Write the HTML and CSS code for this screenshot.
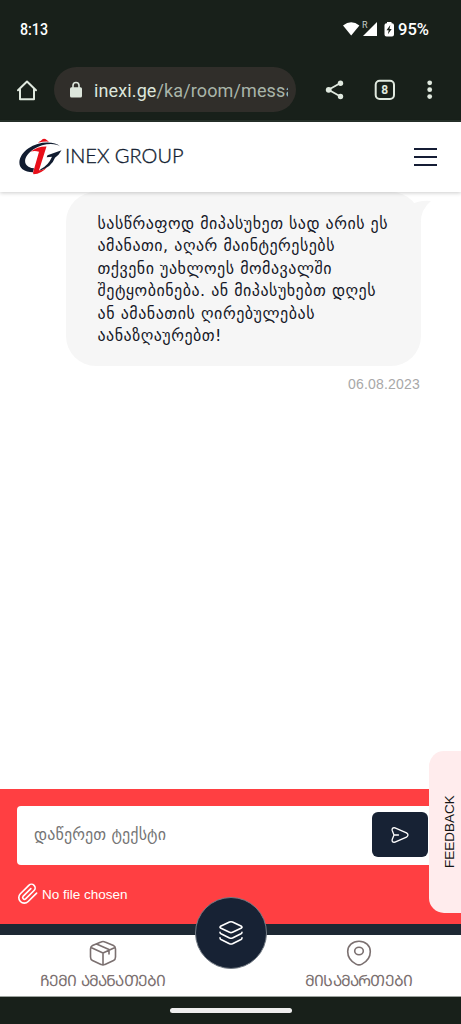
FILE: index.html
```html
<!DOCTYPE html>
<html lang="ka">
<head>
<meta charset="utf-8">
<title>INEX GROUP</title>
<link rel="stylesheet" href="styles.css">
</head>
<body>
<div class="phone">
  <div class="status">
    <svg viewBox="0 0 461 60" width="461" height="60">
      <text x="20" y="35" class="clock" textLength="28" lengthAdjust="spacingAndGlyphs">8:13</text>
      <path fill="#fff" d="M343 25.500Q351.200 18.800 359.400 25.500L351.200 35.500Z"/>
      <text x="362" y="27.500" class="roam">R</text>
      <path fill="#fff" d="M377 22V36H363Z"/>
      <path fill="#fff" d="M387 22h4.500v1.300h.5q2 0 2 2V34.500q0 2-2 2h-5.500q-2 0-2-2V25.300q0-2 2-2h.5z"/>
      <path fill="#18201a" d="M390.300 25l-3.800 5.300h2.200l-.8 4 3.800-5.300h-2.200z"/>
      <text x="398" y="35" class="clock" textLength="31" lengthAdjust="spacingAndGlyphs">95%</text>
    </svg>
  </div>
  <div class="browser">
    <svg class="home" viewBox="0 0 22 22" width="22" height="22" fill="none" stroke="#e0e9df" stroke-width="2" stroke-linejoin="round" stroke-linecap="round"><path d="M2 11.200L11 2.500l9 8.700M4 10.500V20.300h14V10.500"/></svg>
    <div class="address">
      <svg viewBox="0 0 12 17" width="12" height="17"><path d="M3 7V4.500a3 3 0 0 1 6 0V7" fill="none" stroke="#dde6dc" stroke-width="1.600"/><rect y="6.200" width="12" height="10.300" rx="1.500" fill="#dde6dc"/></svg>
      <div class="url"><span class="host">inexi.ge</span>/ka/room/messa</div>
    </div>
    <svg class="tools" viewBox="0 0 120 24" width="120" height="24">
      <g fill="#e0e9df" stroke="#e0e9df"><path d="M20.500 5L8.500 11.800l12 6.700" fill="none" stroke-width="1.800"/><circle cx="20.500" cy="5.200" r="2.700" stroke="none"/><circle cx="8.700" cy="11.800" r="2.900" stroke="none"/><circle cx="20.500" cy="18.500" r="2.700" stroke="none"/></g>
      <rect x="55.700" y="2.700" width="18.300" height="18.300" rx="4" fill="none" stroke="#e0e9df" stroke-width="2"/>
      <text x="64.700" y="16.200" class="tabs" text-anchor="middle">8</text>
      <g fill="#e0e9df"><circle cx="109.700" cy="4.800" r="2.400"/><circle cx="109.700" cy="11.700" r="2.400"/><circle cx="109.700" cy="18.600" r="2.400"/></g>
    </svg>
  </div>
  <header class="header">
    <svg viewBox="0 0 168 40" width="168" height="40">
      <g transform="translate(.5 -1.800)">
        <path fill="#111c30" d="M42 12.500C37 8 24 9 15 15C6 21 4 29 10 32.500Q13 34 15.500 34L14.500 38Q8 38 4 35C-2 30 1 20 10 14C20 7 36 6.500 42 12.500Z"/>
        <path fill="#111c30" d="M43 16L29 21l-.8 2 5.300-.5Q30 31 22 35L21 36.500Q33 33 36.500 23.500L40 20.500Z"/>
        <path fill="#e80f1a" d="M19.500 8.500Q21 7 22.500 6.500Q25 3 28.500 6L30.500 7.500Q26 7 19.500 8.500ZM12 17.500Q19 12 28 12.200L20.500 36Q24 36.500 28.500 33Q23 39.500 15 40L14.500 38.500L20.500 17.500Q16 16 12 17.500Z"/>
      </g>
      <text x="47" y="27.300" class="brand" textLength="118.500" lengthAdjust="spacingAndGlyphs">INEX GROUP</text>
    </svg>
    <div class="burger"><i></i><i></i><i></i></div>
  </header>
  <main class="chat">
    <div class="bubble">
      <svg viewBox="0 0 355 171" width="355" height="171" class="message">
        <text x="31.500" y="37" textLength="290">სასწრაფოდ მიპასუხეთ სად არის ეს</text>
        <text x="31.500" y="59.300" textLength="237">ამანათი, აღარ მაინტერესებს</text>
        <text x="31.500" y="81.700" textLength="234">თქვენი უახლოეს მომავალში</text>
        <text x="31.500" y="104" textLength="278">შეტყობინება. ან მიპასუხებთ დღეს</text>
        <text x="31.500" y="126.500" textLength="217">ან ამანათის ღირებულებას</text>
        <text x="31.500" y="149" textLength="124">აანაზღაურებთ!</text>
      </svg>
      <svg class="tail" viewBox="0 0 20 30" width="20" height="30"><path fill="#f6f6f6" d="M0 12Q8 7 20 8Q10 16 9.500 30H0Z"/></svg>
    </div>
    <time class="date">06.08.2023</time>
  </main>
  <section class="composer">
    <div class="field">
      <svg viewBox="0 0 150 30" width="150" height="30" class="placeholder"><text x="1" y="20" textLength="132">დაწერეთ ტექსტი</text></svg>
      <div class="send">
        <svg viewBox="0 0 20 20" width="20" height="20" fill="none" stroke="#fff" stroke-width="1.300" stroke-linejoin="round" stroke-linecap="round"><path d="M5 2.800L16.500 7.900Q19.500 10 16.500 12.100L5 17.200Q1.500 17.700 2.200 14.500L4 10L2.200 5.500Q1.500 2.300 5 2.800ZM4 10H8.500"/></svg>
      </div>
    </div>
    <div class="file">
      <svg viewBox="0 0 24 24" width="22" height="24" fill="none" stroke="#fff" stroke-width="1.800" stroke-linecap="round" stroke-linejoin="round"><path d="M21.400 11l-9.200 9.200a6 6 0 0 1-8.500-8.500l9.200-9.200a4 4 0 0 1 5.700 5.700L9.400 17.400a2 2 0 0 1-2.800-2.800l8.500-8.500"/></svg>
      <span>No file chosen</span>
    </div>
    <aside class="feedback"><span>FEEDBACK</span></aside>
  </section>
  <nav class="nav">
    <div class="item left">
      <svg viewBox="0 0 28 26" width="28" height="26" fill="none" stroke="#7b7070" stroke-width="1.600" stroke-linejoin="round" stroke-linecap="round"><path d="M12 1.900Q14 1 16 1.900L24.500 5.500Q26.500 6.500 26.500 9V17Q26.500 19.500 24.500 20.500L16 24.400Q14 25.400 12 24.400L3.500 20.500Q1.500 19.500 1.500 17V9Q1.500 6.500 3.500 5.500ZM2 7.500L14 13L26 7.500M14 13V25M7.500 4L20 9.500V14"/></svg>
      <svg class="label" viewBox="0 0 130 22" width="130" height="22"><text x="2" y="16" textLength="126">ᲩᲔᲛᲘ ᲐᲛᲐᲜᲐᲗᲔᲑᲘ</text></svg>
    </div>
    <div class="item right">
      <svg viewBox="0 0 26 26" width="26" height="26" fill="none" stroke="#7b7070" stroke-width="1.600"><path d="M13 1.200C6.500 1.200 1.700 5.500 1.700 11.500C1.700 17 5 21.500 10 24.100Q13 25.600 16 24.100C21 21.500 24.300 17 24.300 11.500C24.300 5.500 19.500 1.200 13 1.200Z"/><ellipse cx="13" cy="11" rx="4.300" ry="3.800"/></svg>
      <svg class="label" viewBox="0 0 110 22" width="110" height="22"><text x="1" y="16" textLength="108">ᲛᲘᲡᲐᲛᲐᲠᲗᲔᲑᲘ</text></svg>
    </div>
    <div class="hub">
      <svg viewBox="0 0 26 26" width="26" height="26" fill="none" stroke="#fff" stroke-width="1.600" stroke-linejoin="round" stroke-linecap="round"><path d="M2.500 6.300L11.500 2Q13 1.400 14.500 2L23.500 6.300Q24.500 7.200 23.500 8L14.500 12.300Q13 13 11.500 12.300L2.500 8Q1.500 7.200 2.500 6.300ZM2 12.200Q2 13.200 3 13.800L11.500 18Q13 18.600 14.500 18L23 13.800Q24 13.200 24 12.200M2 17.700Q2 18.900 3 19.500L11.500 23.700Q13 24.300 14.500 23.700L23 19.500Q24 18.900 24 17.700"/></svg>
    </div>
  </nav>
  <div class="gesture"><i></i></div>
</div>
</body>
</html>
```
FILE: styles.css
```css
* { box-sizing: border-box; }
body { margin: 0; background: #fff; font-family: "Liberation Sans", sans-serif; }
svg { display: block; flex: none; }
.phone { width: 461px; height: 1024px; display: flex; flex-direction: column; overflow: hidden; }
.status { height: 60px; background: #18201a; }
.clock { font: 500 16px Roboto, sans-serif; fill: #fff; }
.roam { font: 9px Roboto, sans-serif; fill: #c6cdc6; }
.browser { height: 62px; background: #18201a; border-bottom: 2px solid #26312a; display: flex; padding: 7px 0 0 16px; }
.home { margin-top: 12px; }
.address { width: 242px; height: 45px; margin-left: 16px; border-radius: 23px; background: #302e2a; display: flex; align-items: center; padding: 0 8px 0 16px; }
.url { margin-left: 12px; flex: 1; overflow: hidden; white-space: nowrap; font: 18px/26px Roboto, sans-serif; letter-spacing: .12px; color: #a9b5a9; padding-top: 2px; }
.host { color: #dde6dc; }
.tools { margin: 11px 0 0 24px; }
.tabs { font: 700 12px Roboto, sans-serif; fill: #e0e9df; }
.header { height: 70px; background: #fff; box-shadow: 0 1px 4px rgba(0,0,0,.2); display: flex; justify-content: space-between; padding: 14px 24px 0 18px; position: relative; z-index: 2; }
.brand { font: 300 20px Lato, sans-serif; fill: #111c30; stroke: #111c30; stroke-width: .35px; }
.burger { display: flex; flex-direction: column; gap: 6px; padding-top: 12px; }
.burger i { width: 23px; height: 2px; background: #151d35; }
.chat { height: 597px; padding-left: 66px; }
.bubble { width: 355px; height: 174px; border-radius: 30px; background: #f6f6f6; position: relative; }
.message text { font: 16px "DejaVu Sans", sans-serif; fill: #161928; }
.tail { position: absolute; left: 345px; top: 1px; }
.date { display: block; width: 354px; text-align: right; margin-top: 8px; font-size: 14px; line-height: 20px; letter-spacing: .2px; color: #a8a8a8; }
.composer { height: 135px; background: #ff3f42; padding: 17px 16px 0 17px; position: relative; }
.field { height: 59px; border-radius: 4px; background: #fff; display: flex; justify-content: space-between; padding: 6px 17px 0 16px; }
.placeholder { margin-top: 8px; }
.placeholder text { font: 16px "DejaVu Sans", sans-serif; fill: #757575; }
.send { width: 56px; height: 45px; border-radius: 6px; background: #172234; display: grid; place-items: center; }
.file { display: flex; align-items: center; gap: 3px; margin-top: 17px; color: #fff; font-size: 13.500px; }
.feedback { position: absolute; z-index: 4; left: 429px; top: -38px; width: 46px; height: 162px; border-radius: 15px; background: #ffeced; }
.feedback span { display: block; width: 42px; height: 162px; line-height: 42px; text-align: center; writing-mode: vertical-rl; transform: rotate(180deg); font-size: 13.500px; color: #151515; }
.nav { height: 73px; background: #fff; border-top: 11px solid #1d2833; border-bottom: 1px solid #9da39e; display: flex; justify-content: space-between; padding: 5px 47px 0 38px; position: relative; z-index: 3; }
.item { display: flex; flex-direction: column; align-items: center; }
.label { margin-top: 4px; }
.label text { font: 15.500px "DejaVu Sans", sans-serif; fill: #7b7070; }
.hub { position: absolute; left: 195px; top: -38px; width: 72px; height: 72px; border-radius: 50%; background: #172234; border: 1px solid #737b84; display: grid; place-items: center; }
.gesture { height: 27px; background: #18201a; display: flex; justify-content: center; padding-top: 11px; }
.gesture i { width: 122px; height: 5px; border-radius: 3px; background: #eee; }
```
